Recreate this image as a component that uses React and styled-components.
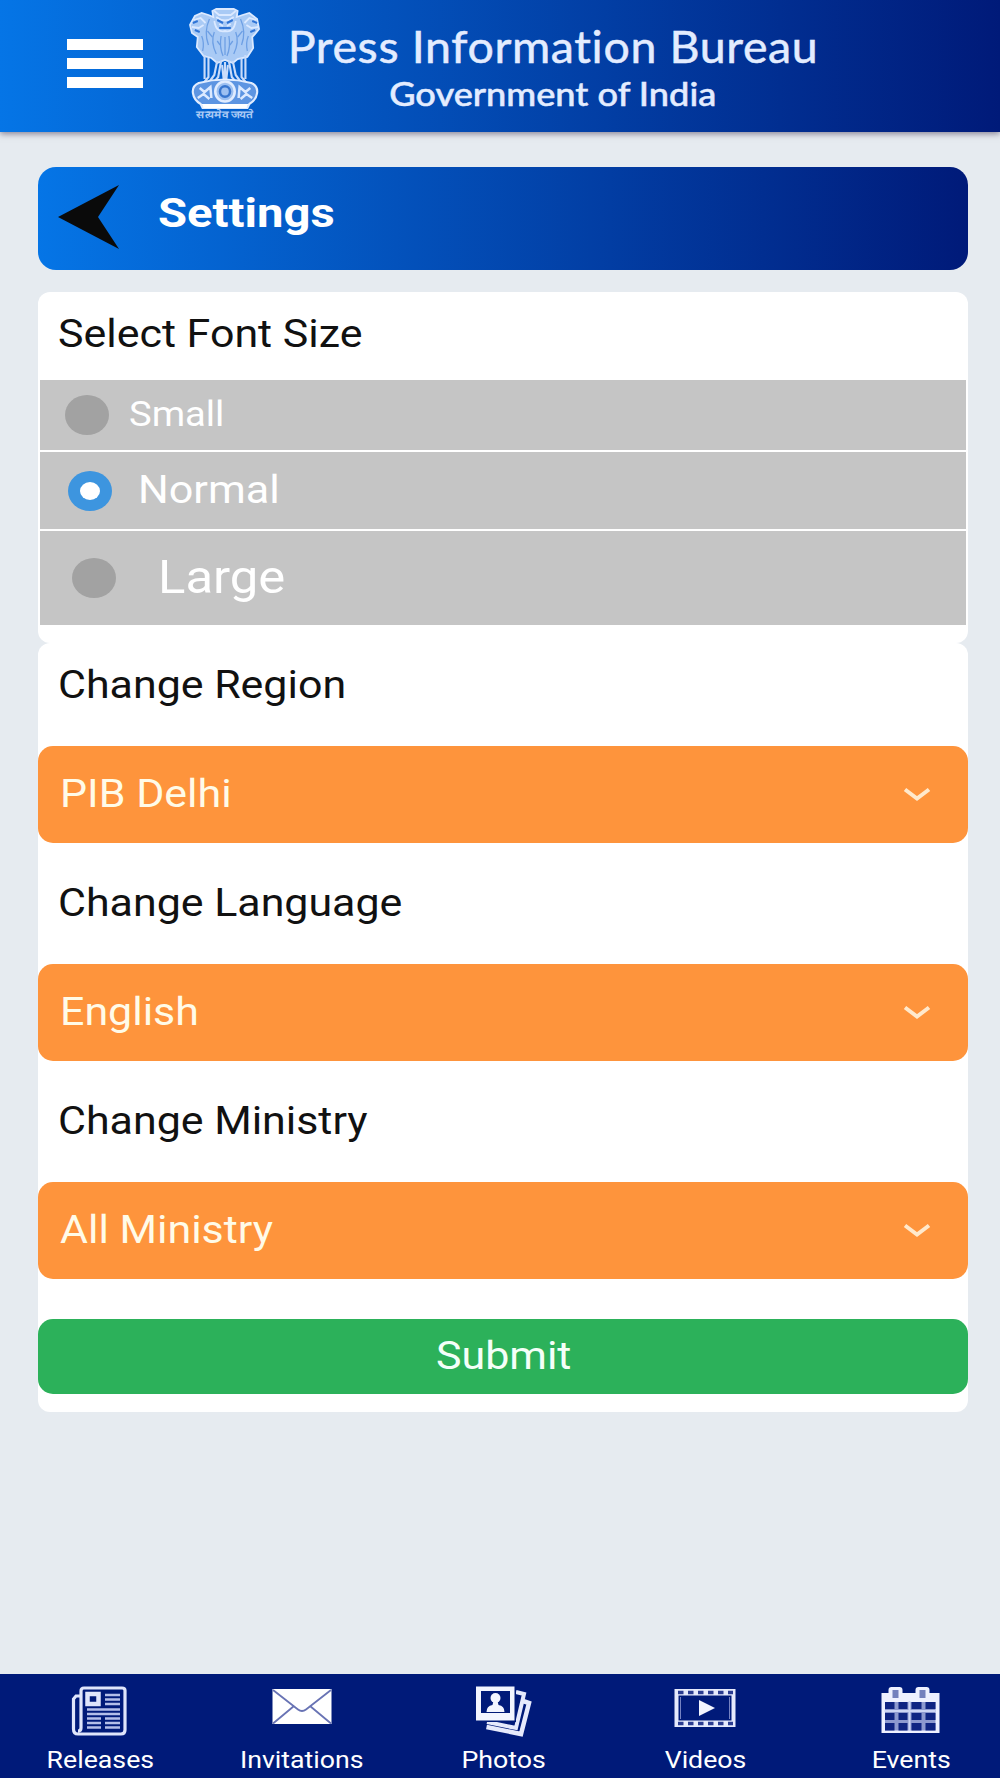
import { useState } from 'react';
import styled, { createGlobalStyle } from 'styled-components';

const GlobalStyle = createGlobalStyle`
  * {
    box-sizing: border-box;
  }

  body {
    margin: 0;
    background-color: #e6ebf0;
    font-family: Roboto, 'Liberation Sans', sans-serif;
    color: #111;
  }

  button {
    border: none;
    font-family: inherit;
    cursor: pointer;
  }
`;

const Page = styled.div`
  display: flex;
  flex-direction: column;
  width: 1000px;
  height: 1778px;
  overflow: hidden;
`;

const Header = styled.header`
  display: flex;
  flex: none;
  height: 132px;
  padding-left: 67px;
  background: linear-gradient(to right, #0575e6, #001a79);
  box-shadow: 0 2px 6px rgba(60, 50, 80, 0.55);
`;

const MenuButton = styled.button`
  display: flex;
  flex-direction: column;
  gap: 8px;
  width: 76px;
  margin-top: 39px;
  padding: 0;
  background: none;

  span {
    width: 76px;
    height: 11px;
    background-color: #fff;
  }
`;

const EmblemIcon = styled.svg`
  width: 72px;
  height: 114px;
  margin: 7px 0 0 46px;
`;

const Brand = styled.div`
  display: flex;
  flex-direction: column;
  align-items: center;
  width: 530px;
  margin: 19px 0 0 27px;
  font-family: Lato, 'Open Sans', sans-serif;
  color: #e3ecff;
  white-space: nowrap;
  -webkit-text-stroke: 0.5px #e3ecff;
`;

const BrandName = styled.span`
  font-size: 44px;
  line-height: 54px;
  letter-spacing: 0.6px;
  transform: scaleX(1.057);
`;

const BrandSub = styled.span`
  font-size: 32px;
  font-weight: 500;
  line-height: 41px;
  transform: scaleX(1.13);
`;

const Content = styled.main`
  flex: 1;
  width: 930px;
  margin: 35px 0 0 38px;
`;

const TitleBar = styled.div`
  display: flex;
  align-items: center;
  height: 103px;
  margin-bottom: 22px;
  padding-left: 20px;
  border-radius: 18px;
  background: linear-gradient(to right, #0575e6, #001a79);
`;

const BackIcon = styled.svg`
  width: 61px;
  height: 64px;
  margin: -4px 39px 0 0;
  fill: #0a0a0a;
`;

// the whole UI font runs a little wide
const Wide = styled.span`
  display: inline-block;
  font-size: ${(props) => props.$size || 38.5}px;
  font-weight: ${(props) => props.$weight || 400};
  white-space: nowrap;
  transform: scaleX(${(props) => props.$scale || 1.115});
  transform-origin: ${(props) => props.$origin || 'left'} center;
`;

const Title = styled.h1`
  margin: 0 0 10px;
  font-size: 40px;
  line-height: 50px;
  color: #fff;
`;

const Panel = styled.section`
  padding-bottom: 18px;
  border-radius: 12px;
  background-color: #fff;
`;

const Label = styled.div`
  height: ${(props) => props.$height}px;
  padding: ${(props) => props.$top || 0}px 0 0 20px;
  line-height: 84px;
`;

const Options = styled.div`
  display: flex;
  flex-direction: column;
  gap: 2px;
  padding: 0 2px;
`;

const Option = styled.label`
  display: flex;
  align-items: center;
  gap: ${(props) => props.$gap}px;
  height: ${(props) => props.$height}px;
  padding-left: ${(props) => props.$left}px;
  background-color: #c5c5c5;
  color: #fff;
  cursor: pointer;

  input {
    display: none;
  }

  ${Wide} {
    margin-bottom: 2px;
  }
`;

const Radio = styled.span`
  display: flex;
  align-items: center;
  justify-content: center;
  width: 44px;
  height: 40px;
  border-radius: 50%;
  background-color: ${(props) => (props.$checked ? '#3d95df' : '#a2a2a2')};

  &::after {
    content: '';
    width: 20px;
    height: 18px;
    border-radius: 50%;
    background-color: ${(props) => (props.$checked ? '#fff' : 'transparent')};
  }
`;

const Select = styled.button`
  display: flex;
  align-items: center;
  justify-content: space-between;
  width: 100%;
  height: 97px;
  padding: 0 37px 0 22px;
  border-radius: 15px;
  background-color: #fe943c;
  color: #fffbe8;

  ${Wide} {
    margin-bottom: 3px;
  }

  svg {
    width: 28px;
    height: 16px;
    fill: none;
    stroke: #ffe9cc;
    stroke-width: 4;
  }
`;

const Submit = styled.button`
  display: block;
  width: 100%;
  height: 75px;
  margin-top: 40px;
  padding: 0 0 2px 1px;
  border-radius: 15px;
  background-color: #2cb15a;
  color: #f4fff8;
`;

const TabBar = styled.nav`
  display: grid;
  flex: none;
  grid-template-columns: 200px 203px 201px 202px 194px;
  height: 104px;
  background-color: #001a79;
`;

const Tab = styled.a`
  display: flex;
  flex-direction: column;
  align-items: center;
  color: #fff;

  &:last-child {
    padding-left: 17px;
  }

  svg {
    width: 64px;
    height: 52px;
    margin-top: 11px;
  }

  ${Wide} {
    margin-top: 8px;
    line-height: 30px;
  }
`;

const Emblem = () => (
  <EmblemIcon viewBox="0 0 74 114" preserveAspectRatio="none">
    {/* lions */}
    <g fill="#a9caf5" stroke="#dbe9ff" strokeWidth="1.8">
      <path d="M24 4 L28 2 H46 L50 4 L49 10 L55 8 L62 6 L70 12 L72 22 L68 27 L65 30 L66 41 L60 50 L50 52 L45 56 L37 53 L29 56 L23 51 L15 49 L8 40 L9 30 L3 26 L1 18 L6 9 L13 6 L20 8 L25 10 Z" />
      <path d="M26 4 L31 8 H43 L48 4 M28 10 Q37 17 46 10 M26 14 Q28 26 37 24 Q46 26 48 14 M31 17 L35 19 M43 17 L39 19" fill="none" />
      <path d="M5 13 L12 11 L17 16 M3 20 L10 21 L15 18 M69 13 L62 11 L57 16 M71 20 L64 21 L59 18" fill="none" />
    </g>
    <path d="M4 16 L9 14 M6 23 L11 25 M70 16 L65 14 M68 23 L63 25 M29 13 L35 16 M45 13 L39 16 M31 21 H43" fill="none" stroke="#2f74d6" strokeWidth="2" />
    <g fill="none" stroke="#6d9fe4" strokeWidth="1.3">
      <path d="M21 12 Q15 25 20 38 M53 12 Q59 25 54 38 M26 25 Q22 35 28 47 M48 25 Q52 35 46 47" />
      <path d="M13 29 Q16 36 14 44 M61 29 Q58 36 60 44 M33 29 Q31 40 35 49 M41 29 Q43 40 39 49" />
      <path d="M19 24 L24 30 M55 24 L50 30 M29 34 L32 38 M45 34 L42 38 M37 30 V48" />
    </g>
    {/* legs */}
    <g fill="none" stroke="#c9dcfa" strokeWidth="2.200">
      <path d="M16 48 V72 M20 51 V70 L15 76 M29 54 L26 68 L20 76 M33 54 L30 70 L25 76 M41 54 L44 70 L49 76 M45 54 L48 68 L54 76 M54 51 V70 L59 76 M58 48 V72" />
      <path d="M37 55 V75 M34 58 L36 75 M40 58 L38 75" />
    </g>
    {/* abacus with the wheel */}
    <path d="M10 76 Q37 69 64 76 Q71 79 70 86 Q69 93 62 97 L60 101 H14 L12 97 Q5 93 4 86 Q3 79 10 76 Z" fill="#5d95e2" stroke="#e0ecff" strokeWidth="2.2" />
    <path d="M11 81 L16 85 L22 80 L23 91 M9 91 L15 87 L21 92 M63 81 L58 85 L52 80 L51 91 M65 91 L59 87 L53 92" fill="none" stroke="#dbe9ff" strokeWidth="2.6" />
    <circle cx="37" cy="84.500" r="10" fill="#9dc0f1" stroke="#e0ecff" strokeWidth="2.6" />
    <circle cx="37" cy="84.500" r="5.2" fill="none" stroke="#3876cf" strokeWidth="2.6" />
    <path d="M13 97 H61 L59 101 H15 Z" fill="#fff" />
    <text x="37" y="111.500" textAnchor="middle" textLength="59" lengthAdjust="spacingAndGlyphs" fontSize="10" fontWeight="700" fill="#a9c9f5">सत्यमेव जयते</text>
  </EmblemIcon>
);

const NewspaperIcon = () => (
  <svg viewBox="1 0 64 52" fill="none" stroke="#dfe5fb">
    <path d="M13 11 H9 L6.500 14 V44 Q6.500 49 11 49 H54 Q58 49 58 45 V5.500 Q58 3 55 3 H17 Q14 3 14 6 V43 Q14 46 11 46" strokeWidth="3.200" />
    <rect x="20.500" y="9" width="11" height="10" strokeWidth="4.500" />
    <path d="M38 10 H53 M38 14.500 H53 M38 19 H53 M20 24.500 H53 M20 29 H53 M20 33.500 H34 M20 38 H34 M20 42.500 H34 M38 33.500 H53 M38 38 H53 M38 42.500 H53" strokeWidth="2.300" stroke="#b4bfe9" />
  </svg>
);

const EnvelopeIcon = () => (
  <svg viewBox="0 0 64 52">
    <rect x="2.500" y="4" width="59" height="35" fill="#fff" />
    <path d="M3 5 L28 24.500 Q32 27.500 36 24.500 L61 5 M3 38.500 L24 21 M61 38.500 L40 21" fill="none" stroke="#6873b4" strokeWidth="1.800" />
  </svg>
);

const PhotosIcon = () => (
  <svg viewBox="0 0 64 52">
    <path d="M44 7 L52 9 L44 43 L15 37" fill="none" stroke="#e6eafc" strokeWidth="4" />
    <path d="M51 16 L57 18 L49 49 L14.500 42" fill="none" stroke="#e6eafc" strokeWidth="4.500" />
    <rect x="4" y="1" width="40" height="36" fill="#001a79" />
    <path d="M4 1.500 H42.500 V35.500 H4 Z M9 6 V28 H38 V6 Z" fill="#f2f5ff" fillRule="evenodd" />
    <circle cx="23.500" cy="13" r="5" fill="#f2f5ff" />
    <path d="M21.500 16 H25.500 L26.500 20 Q32.500 21 32.500 27 H14.500 Q14.500 21 20.500 20 Z" fill="#f2f5ff" />
  </svg>
);

const VideosIcon = () => (
  <svg viewBox="0 0 64 52">
    <path d="M1.500 4 H62.500 V42 H1.500 Z M5.500 10.500 V35.500 H58.500 V10.500 Z" fill="#e6eafc" fillRule="evenodd" />
    <path d="M5 7.500 H60 M5 38.500 H60" stroke="#2a3c91" strokeWidth="3.500" strokeDasharray="5.500 4.500" />
    <path d="M7.500 12 V34 M56.500 12 V34" stroke="#7582c1" strokeWidth="1" />
    <path d="M26 15 L42 23 L26 31 Z" fill="#f2f5ff" />
  </svg>
);

const CalendarIcon = () => (
  <svg viewBox="1.500 0 64 52">
    <path d="M3 8 H10 V5 Q10 2 13 2 H21 Q24 2 24 5 V8 H37 V5 Q37 2 40 2 H48 Q51 2 51 5 V8 H61 V48 H3 Z" fill="#eef1ff" />
    <path d="M14 5 H20 V13 H14 Z M41 5 H47 V13 H41 Z" fill="#7481bd" />
    <path d="M6.500 17 H57 V45.500 H6.500 Z" fill="#8d99cf" />
    <path d="M6.500 17 H16 V24 H6.500 Z M20 17 H29 V24 H20 Z M33 17 H43 V24 H33 Z M47 17 H57 V24 H47 Z M6.500 28 H16 V35 H6.500 Z M20 28 H29 V35 H20 Z M33 28 H43 V35 H33 Z M47 28 H57 V35 H47 Z M6.500 38 H16 V45.500 H6.500 Z M20 38 H29 V45.500 H20 Z M33 38 H43 V45.500 H33 Z M47 38 H57 V45.500 H47 Z" fill="#0f2482" />
    <path d="M6 26 H57 M31 16 V46" stroke="#cdd5f4" strokeWidth="2" />
  </svg>
);

const fontSizes = [
  { name: 'Small', size: 34.5, height: 70, left: 25, gap: 20 },
  { name: 'Normal', size: 39, height: 77, left: 28, gap: 26 },
  { name: 'Large', size: 46, height: 94, left: 31.5, gap: 42 },
];

const selects = [
  { label: 'Change Region', value: 'PIB Delhi' },
  { label: 'Change Language', value: 'English' },
  { label: 'Change Ministry', value: 'All Ministry' },
];

const tabs = [
  { name: 'Releases', Icon: NewspaperIcon },
  { name: 'Invitations', Icon: EnvelopeIcon },
  { name: 'Photos', Icon: PhotosIcon },
  { name: 'Videos', Icon: VideosIcon },
  { name: 'Events', Icon: CalendarIcon },
];

const App = () => {
  const [fontSize, setFontSize] = useState('Normal');

  return (
    <Page>
      <GlobalStyle />
      <Header>
        <MenuButton aria-label="Menu">
          <span />
          <span />
          <span />
        </MenuButton>
        <Emblem />
        <Brand>
          <BrandName>Press Information Bureau</BrandName>
          <BrandSub>Government of India</BrandSub>
        </Brand>
      </Header>

      <Content>
        <TitleBar>
          <BackIcon viewBox="0 0 61 64">
            <path d="M0 32 L61 0 L40 32 L61 64 Z" />
          </BackIcon>
          <Title>
            <Wide $size={40} $weight={700} $scale={1.18}>Settings</Wide>
          </Title>
        </TitleBar>

        {/* font size */}
        <Panel>
          <Label $height={88}>
            <Wide>Select Font Size</Wide>
          </Label>
          <Options>
            {fontSizes.map(({ name, size, height, left, gap }) => (
              <Option key={name} $height={height} $left={left} $gap={gap}>
                <input
                  type="radio"
                  name="fontSize"
                  checked={fontSize === name}
                  onChange={() => setFontSize(name)}
                />
                <Radio $checked={fontSize === name} />
                <Wide $size={size} $scale={1.105}>{name}</Wide>
              </Option>
            ))}
          </Options>
        </Panel>

        {/* region, language, ministry */}
        <Panel>
          {selects.map(({ label, value }, index) => (
            <div key={label}>
              <Label $height={index === 0 ? 103 : 121} $top={index === 0 ? 0 : 18}>
                <Wide>{label}</Wide>
              </Label>
              <Select>
                <Wide>{value}</Wide>
                <svg viewBox="0 0 28 16">
                  <path d="M2 2.500 L14 11.500 L26 2.500" />
                </svg>
              </Select>
            </div>
          ))}
          <Submit>
            <Wide $origin="center">Submit</Wide>
          </Submit>
        </Panel>
      </Content>

      <TabBar>
        {tabs.map(({ name, Icon }) => (
          <Tab key={name}>
            <Icon />
            <Wide $size={24.5} $scale={1.09} $origin="center">{name}</Wide>
          </Tab>
        ))}
      </TabBar>
    </Page>
  );
};

export default App;
